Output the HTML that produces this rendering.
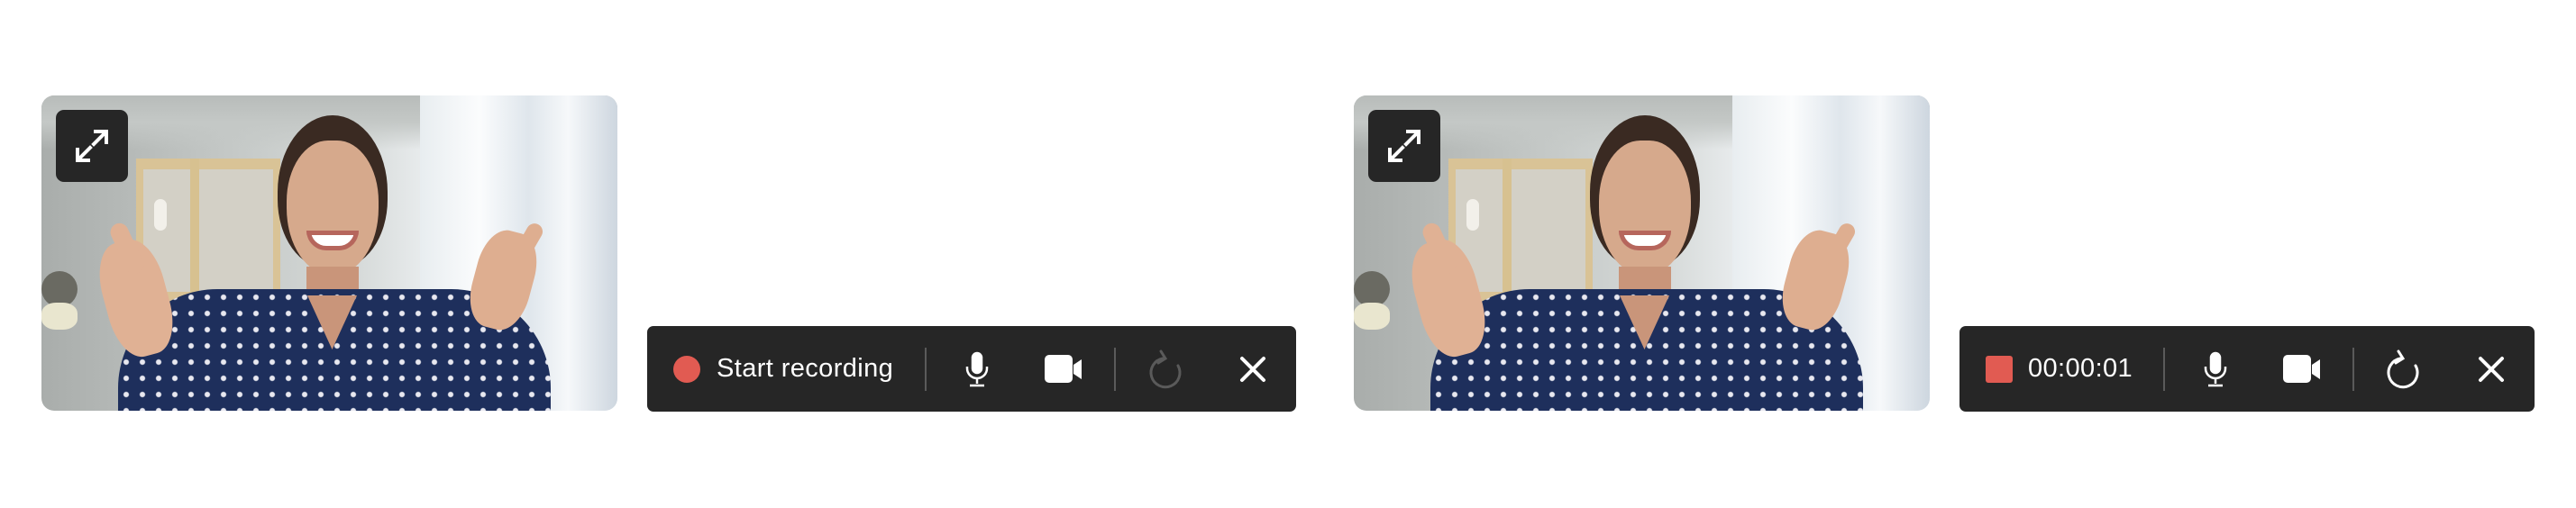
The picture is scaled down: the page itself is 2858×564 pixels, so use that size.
<!DOCTYPE html>
<html><head><meta charset="utf-8"><style>
*{margin:0;padding:0;box-sizing:border-box}
body{width:2858px;height:564px;background:#fff;position:relative;overflow:hidden;font-family:"Liberation Sans",sans-serif}
.vid{position:absolute;top:106px;width:639px;height:350px;border-radius:14px;overflow:hidden;background:linear-gradient(90deg,#a9adab 0%,#c2c6c4 30%,#d6dad9 55%,#eef1f3 70%,#f7f9fb 85%,#e4e9ee 100%)}
.vid div{position:absolute}
.bar{position:absolute;top:362px;height:95px;background:#262626;border-radius:7px}
.bar svg{position:absolute}
.div{position:absolute;top:386px;width:2px;height:48px;background:#5a5a5a}
.txt{position:absolute;top:391px;color:#fff;font-size:29px;line-height:36px;letter-spacing:0.4px}
</style></head><body>

<div class="vid" style="left:46px">
 <div style="left:0;top:0;width:639px;height:60px;background:linear-gradient(#b8bcba,#c4c8c6 ,transparent)"></div>
 <div style="left:420px;top:0;width:219px;height:350px;background:linear-gradient(90deg,#e8edf0,#fbfcfd 30%,#dfe6ec 55%,#f6f8fa 75%,#cdd6df)"></div>
 <div style="left:105px;top:70px;width:160px;height:160px;border:10px solid #d9c396;border-width:12px 8px 12px 8px;background:#d3d0c6"></div>
 <div style="left:165px;top:70px;width:10px;height:280px;background:#d7c190"></div>
 <div style="left:125px;top:115px;width:14px;height:35px;border-radius:7px;background:#f2f0ea"></div>
 <div style="left:0;top:195px;width:40px;height:40px;border-radius:50%;background:#6a6a62"></div>
 <div style="left:0;top:230px;width:40px;height:30px;background:#e9e6cf;border-radius:40%"></div>
 <div style="left:262px;top:22px;width:122px;height:170px;border-radius:50% 50% 45% 45%;background:#3a2a22"></div>
 <div style="left:272px;top:50px;width:102px;height:150px;border-radius:45% 45% 50% 50%;background:#d6a98c"></div>
 <div style="left:294px;top:150px;width:58px;height:22px;border-radius:0 0 30px 30px;background:#fff;border:5px solid #b6665c"></div>
 <div style="left:294px;top:190px;width:58px;height:50px;background:#c9957a"></div>
 <div style="left:85px;top:215px;width:480px;height:160px;border-radius:110px 110px 0 0;background-color:#1e2f5c;background-image:radial-gradient(circle,#e8e8f0 2.5px,transparent 3.5px);background-size:18px 18px"></div>
 <div style="left:295px;top:222px;width:55px;height:60px;background:#c9957a;clip-path:polygon(0 0,100% 0,50% 100%)"></div>
 <div style="left:70px;top:160px;width:70px;height:130px;border-radius:40%;background:#e0b194;transform:rotate(-15deg)"></div>
 <div style="left:85px;top:140px;width:20px;height:60px;border-radius:10px;background:#e0b194;transform:rotate(-25deg)"></div>
 <div style="left:480px;top:150px;width:65px;height:110px;border-radius:40%;background:#deae90;transform:rotate(15deg)"></div>
 <div style="left:530px;top:140px;width:18px;height:50px;border-radius:9px;background:#deae90;transform:rotate(30deg)"></div>
 <div style="left:16px;top:16px;width:80px;height:80px;border-radius:9px;background:#262626"></div>
 <svg style="position:absolute;left:16px;top:16px" width="80" height="80" viewBox="0 0 80 80" fill="none" stroke="#fff" stroke-width="4" stroke-linecap="square"><path d="M42 38L54 26M44 24H56V36M38 42L26 54M24 44V56H36"/></svg>
</div>

<div class="bar" style="left:718px;width:720px">
 <svg style="left:29px;top:33px" width="30" height="30"><circle cx="15" cy="15" r="15" fill="#e15b52"/></svg>
</div>
<div class="txt" style="left:795px">Start recording</div>
<div class="div" style="left:1026px"></div>
<div class="div" style="left:1236px"></div>

<div class="vid" style="left:1502px">
 <div style="left:0;top:0;width:639px;height:60px;background:linear-gradient(#b8bcba,#c4c8c6 ,transparent)"></div>
 <div style="left:420px;top:0;width:219px;height:350px;background:linear-gradient(90deg,#e8edf0,#fbfcfd 30%,#dfe6ec 55%,#f6f8fa 75%,#cdd6df)"></div>
 <div style="left:105px;top:70px;width:160px;height:160px;border:10px solid #d9c396;border-width:12px 8px 12px 8px;background:#d3d0c6"></div>
 <div style="left:165px;top:70px;width:10px;height:280px;background:#d7c190"></div>
 <div style="left:125px;top:115px;width:14px;height:35px;border-radius:7px;background:#f2f0ea"></div>
 <div style="left:0;top:195px;width:40px;height:40px;border-radius:50%;background:#6a6a62"></div>
 <div style="left:0;top:230px;width:40px;height:30px;background:#e9e6cf;border-radius:40%"></div>
 <div style="left:262px;top:22px;width:122px;height:170px;border-radius:50% 50% 45% 45%;background:#3a2a22"></div>
 <div style="left:272px;top:50px;width:102px;height:150px;border-radius:45% 45% 50% 50%;background:#d6a98c"></div>
 <div style="left:294px;top:150px;width:58px;height:22px;border-radius:0 0 30px 30px;background:#fff;border:5px solid #b6665c"></div>
 <div style="left:294px;top:190px;width:58px;height:50px;background:#c9957a"></div>
 <div style="left:85px;top:215px;width:480px;height:160px;border-radius:110px 110px 0 0;background-color:#1e2f5c;background-image:radial-gradient(circle,#e8e8f0 2.5px,transparent 3.5px);background-size:18px 18px"></div>
 <div style="left:295px;top:222px;width:55px;height:60px;background:#c9957a;clip-path:polygon(0 0,100% 0,50% 100%)"></div>
 <div style="left:70px;top:160px;width:70px;height:130px;border-radius:40%;background:#e0b194;transform:rotate(-15deg)"></div>
 <div style="left:85px;top:140px;width:20px;height:60px;border-radius:10px;background:#e0b194;transform:rotate(-25deg)"></div>
 <div style="left:480px;top:150px;width:65px;height:110px;border-radius:40%;background:#deae90;transform:rotate(15deg)"></div>
 <div style="left:530px;top:140px;width:18px;height:50px;border-radius:9px;background:#deae90;transform:rotate(30deg)"></div>
 <div style="left:16px;top:16px;width:80px;height:80px;border-radius:9px;background:#262626"></div>
 <svg style="position:absolute;left:16px;top:16px" width="80" height="80" viewBox="0 0 80 80" fill="none" stroke="#fff" stroke-width="4" stroke-linecap="square"><path d="M42 38L54 26M44 24H56V36M38 42L26 54M24 44V56H36"/></svg>
</div>

<div class="bar" style="left:2174px;width:638px">
 <svg style="left:29px;top:33px" width="30" height="30"><rect width="30" height="30" rx="3" fill="#e15b52"/></svg>
</div>
<div class="txt" style="left:2250px">00:00:01</div>
<div class="div" style="left:2400px"></div>
<div class="div" style="left:2610px"></div>

<svg style="position:absolute;left:1064px;top:390px" width="40" height="40" viewBox="0 0 40 40" fill="none" stroke="#fff" stroke-width="2.5"><rect x="15" y="2" width="10" height="22" rx="5" fill="#fff"/><path d="M9 17v2a11 11 0 0 0 22 0v-2M20 30v6M12 38h16"/></svg>
<svg style="position:absolute;left:1158px;top:393px" width="44" height="34" viewBox="0 0 44 34"><rect x="1" y="1" width="31" height="31" rx="5" fill="#fff"/><path d="M33 12l9-6v22l-9-6z" fill="#fff"/></svg>
<svg style="position:absolute;left:1272px;top:388px" width="44" height="46" viewBox="0 0 44 46" fill="none" stroke="#5a5a5a" stroke-width="3" stroke-linecap="round"><path d="M18 10A16 16 0 1 0 35 18"/><path d="M16 2l5 8-8 5"/></svg>
<svg style="position:absolute;left:1374px;top:394px" width="32" height="32" viewBox="0 0 32 32" stroke="#fff" stroke-width="4" stroke-linecap="round"><path d="M4 4L28 28M28 4L4 28"/></svg>

<svg style="position:absolute;left:2438px;top:390px" width="40" height="40" viewBox="0 0 40 40" fill="none" stroke="#fff" stroke-width="2.5"><rect x="15" y="2" width="10" height="22" rx="5" fill="#fff"/><path d="M9 17v2a11 11 0 0 0 22 0v-2M20 30v6M12 38h16"/></svg>
<svg style="position:absolute;left:2532px;top:393px" width="44" height="34" viewBox="0 0 44 34"><rect x="1" y="1" width="31" height="31" rx="5" fill="#fff"/><path d="M33 12l9-6v22l-9-6z" fill="#fff"/></svg>
<svg style="position:absolute;left:2645px;top:388px" width="44" height="46" viewBox="0 0 44 46" fill="none" stroke="#fff" stroke-width="3" stroke-linecap="round"><path d="M18 10A16 16 0 1 0 35 18"/><path d="M16 2l5 8-8 5"/></svg>
<svg style="position:absolute;left:2748px;top:394px" width="32" height="32" viewBox="0 0 32 32" stroke="#fff" stroke-width="4" stroke-linecap="round"><path d="M4 4L28 28M28 4L4 28"/></svg>
</body></html>
